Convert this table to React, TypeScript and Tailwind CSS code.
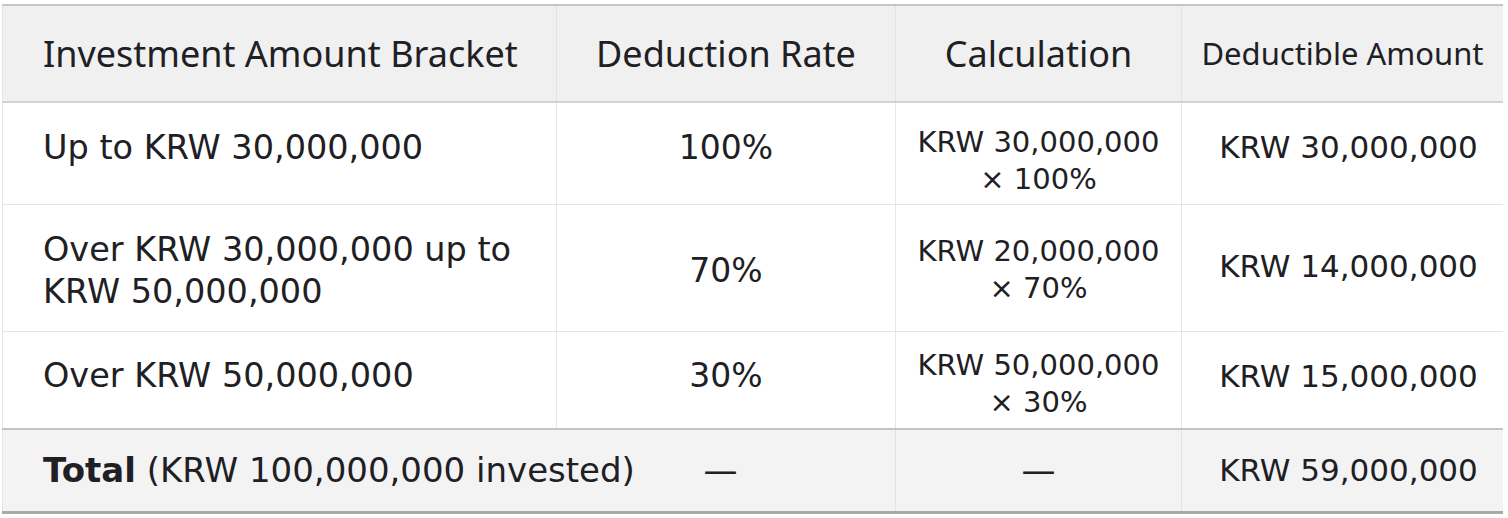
import React from 'react';

const cols = 'grid grid-cols-[554px_339px_286px_322px]';
const body = "font-['DejaVu_Sans',sans-serif]";

interface Row {
    bracket: React.ReactNode;
    rate: string;
    calc: [string, string];
    amount: string;
    h: string;
    pad: string;
    calcPad: string;
}

const rows: Row[] = [
    { bracket: 'Up to KRW 30,000,000', rate: '100%', calc: ['KRW 30,000,000', '× 100%'], amount: 'KRW 30,000,000', h: 'h-[102px]', pad: 'pb-[12px]', calcPad: 'pt-[14px]' },
    { bracket: <>Over KRW 30,000,000 up to<br />KRW 50,000,000</>, rate: '70%', calc: ['KRW 20,000,000', '× 70%'], amount: 'KRW 14,000,000', h: 'h-[127px]', pad: 'pt-[5px]', calcPad: 'pt-[4px]' },
    { bracket: 'Over KRW 50,000,000', rate: '30%', calc: ['KRW 50,000,000', '× 30%'], amount: 'KRW 15,000,000', h: 'h-[98px]', pad: 'pb-[8px]', calcPad: 'pt-[8px]' },
];

export default function App() {
    return (
        <div className="w-[1508px] h-[518px] bg-white pt-[4px] pl-[2px] text-[#202024] font-['Noto_Sans',sans-serif]">
            <div className="w-[1501px] border-t-2 border-b-[3px] border-t-[#c6c6c8] border-b-[#a9a9ac]">
                {/* header */}
                <div className={`${cols} h-[97px] bg-[#f0f0f1] border-b-2 border-[#d3d3d5] text-[36px]`}>
                    <div className="flex items-center pl-[40px] border-l border-[#e6e6e6]">Investment Amount Bracket</div>
                    <div className="flex items-center justify-center border-l border-[#e2e2e4]">Deduction Rate</div>
                    <div className="flex items-center justify-center border-l border-[#e2e2e4]">Calculation</div>
                    <div className="flex items-center justify-center border-l border-[#e2e2e4] text-[31px]">Deductible Amount</div>
                </div>

                {rows.map((r, i) => (
                    <div
                        key={i}
                        className={`${cols} ${body} ${r.h} ${i < rows.length - 1 ? 'border-b border-[#e4e4e6]' : 'border-b-2 border-[#c4c4c6]'}`}
                    >
                        <div className={`flex items-center pl-[40px] text-[33.5px] leading-[42px] border-l border-[#e6e6e6] ${r.pad}`}>
                            <span>{r.bracket}</span>
                        </div>
                        <div className={`flex items-center justify-center text-[33px] border-l border-[#e6e6e6] ${r.pad}`}>{r.rate}</div>
                        <div className={`flex flex-col items-center justify-center border-l border-[#e6e6e6] text-[29px] leading-[37px] ${r.calcPad}`}>
                            <span>{r.calc[0]}</span>
                            <span>{r.calc[1]}</span>
                        </div>
                        <div className={`flex items-center justify-center border-l border-[#e6e6e6] pl-[12px] text-[31px] ${i === 1 ? 'pb-[4px]' : r.pad}`}>{r.amount}</div>
                    </div>
                ))}

                {/* total */}
                <div className={`${cols} ${body} h-[81px] bg-[#f3f3f4]`}>
                    <div className="flex items-center pl-[40px] text-[34px] whitespace-nowrap border-l border-[#e6e6e6]">
                        <span><b className="font-bold">Total</b> (KRW 100,000,000 invested)</span>
                    </div>
                    <div className="flex items-center justify-center text-[34px] pr-[10px]">—</div>
                    <div className="flex items-center justify-center text-[34px] border-l border-[#e2e2e4]">—</div>
                    <div className="flex items-center justify-center border-l border-[#e2e2e4] pl-[12px] text-[31px]">KRW 59,000,000</div>
                </div>
            </div>
        </div>
    );
}
